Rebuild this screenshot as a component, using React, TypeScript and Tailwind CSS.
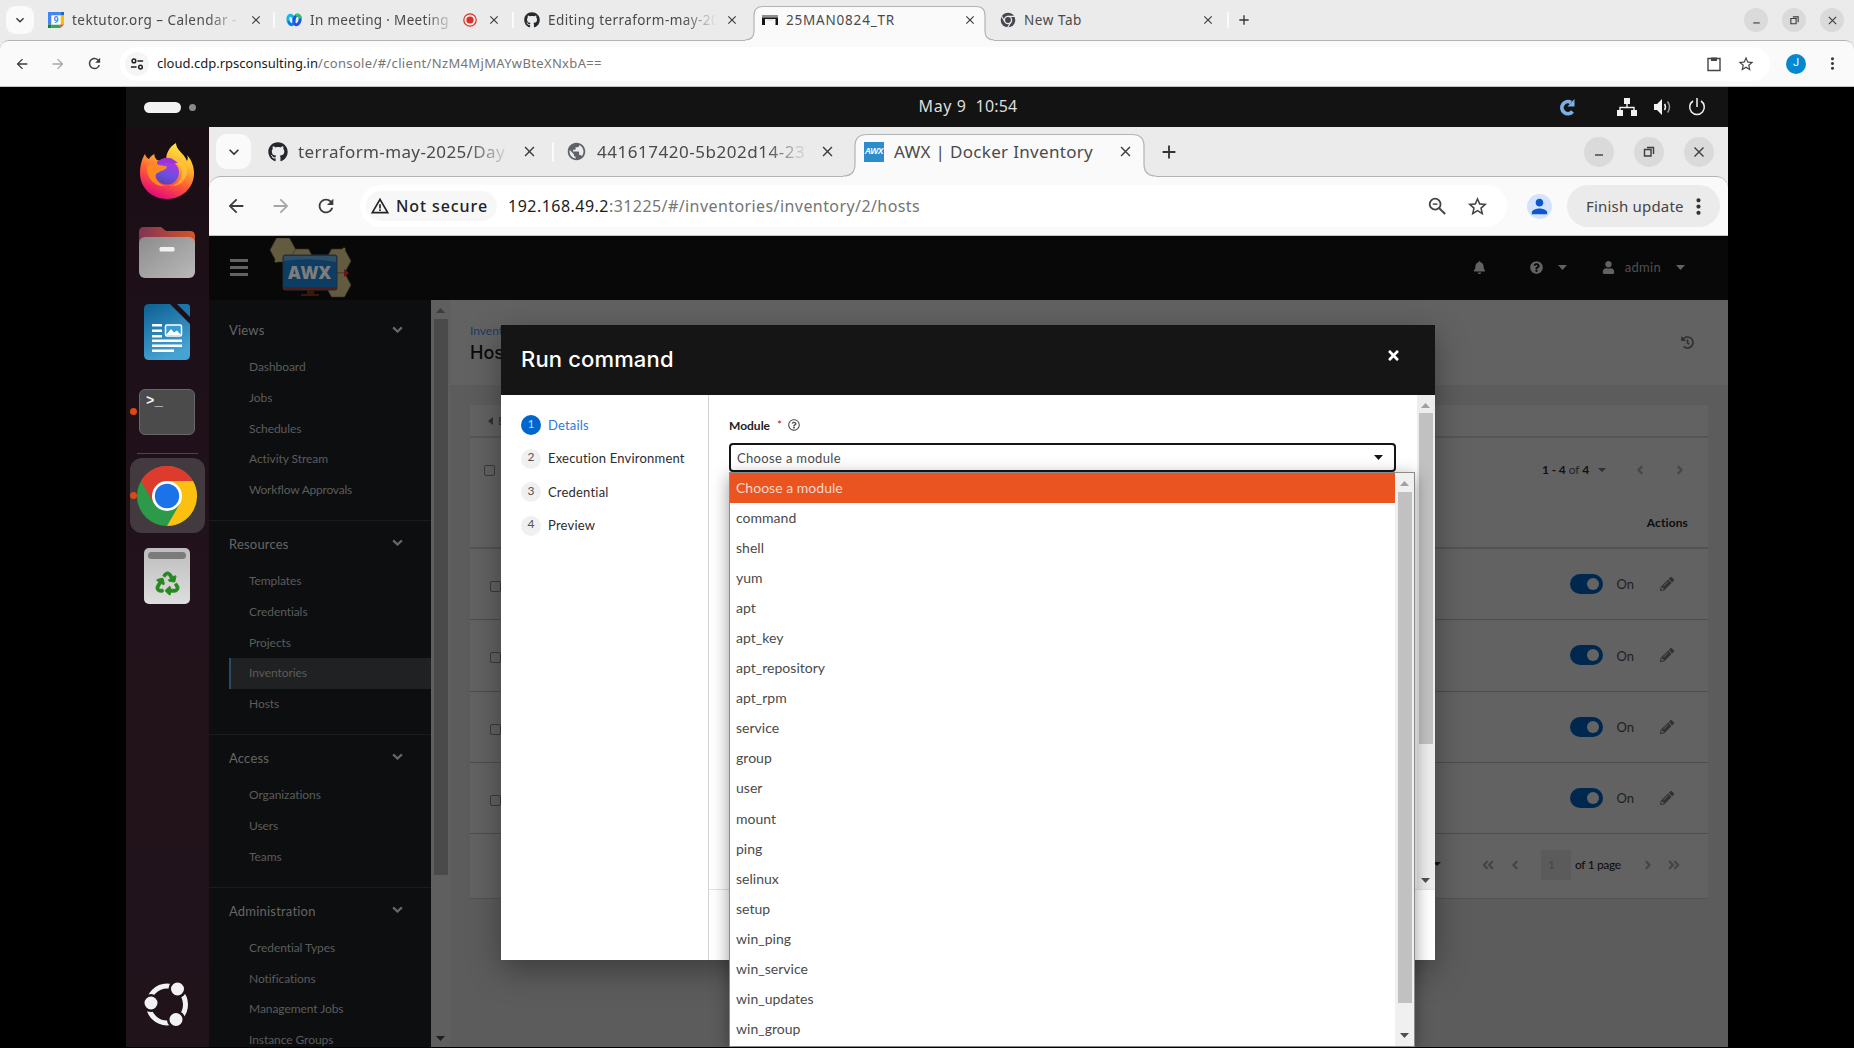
import type { ReactNode } from "react";
import {
  MdAdd,
  MdArrowBack,
  MdArrowForward,
  MdClose,
  MdKeyboardArrowDown,
  MdMoreVert,
  MdPerson,
  MdPublic,
  MdRefresh,
  MdStarBorder,
  MdWarningAmber,
} from "react-icons/md";
import {
  FaAngleDoubleLeft,
  FaAngleDoubleRight,
  FaAngleLeft,
  FaAngleRight,
  FaBell,
  FaGithub,
  FaHistory,
  FaPencilAlt,
  FaQuestionCircle,
  FaRecycle,
  FaRegQuestionCircle,
  FaTimes,
  FaUser,
} from "react-icons/fa";

const fade = "[mask-image:linear-gradient(to_right,black_80%,transparent)]";

function Triangle({ className, dir = "down" }: { className: string; dir?: "up" | "down" | "left" }) {
  const d = { up: "M0 10L10 0L20 10Z", down: "M0 0L20 0L10 10Z", left: "M20 0L20 20L0 10Z" }[dir];
  return (
    <svg viewBox={dir === "left" ? "0 0 20 20" : "0 0 20 10"} preserveAspectRatio="none" className={className}>
      <path d={d} fill="currentColor" />
    </svg>
  );
}

/* ---------- favicons ---------- */

function CalendarIcon() {
  return (
    <svg viewBox="0 0 16 16" className="size-4 shrink-0">
      <path d="M0 0h12.500v3.500H3.500v9H0z" fill="#4285f4" />
      <path d="M12.500 0H16v3.500h-3.500z" fill="#1967d2" />
      <path d="M12.500 3.500H16v9h-3.500z" fill="#fbbc04" />
      <path d="M0 12.500h3.500V16H0z" fill="#188038" />
      <path d="M3.500 12.500h9V16h-9z" fill="#34a853" />
      <path d="M12.500 12.500H16L12.500 16z" fill="#ea4335" />
      <path d="M3.500 3.500h9v9h-9z" fill="#fff" />
      <text x="8" y="11.300" textAnchor="middle" fontSize="9" fontWeight="700" fontFamily="Roboto, sans-serif" fill="#4285f4">9</text>
    </svg>
  );
}

function WebexIcon() {
  return (
    <svg viewBox="0 0 16 16" className="size-4 shrink-0" fill="none">
      <ellipse cx="5" cy="8" rx="3" ry="4.800" stroke="#12b5e8" strokeWidth="3" transform="rotate(-12 5 8)" />
      <ellipse cx="11" cy="8" rx="3" ry="4.800" stroke="#1f50e8" strokeWidth="3" transform="rotate(12 11 8)" />
      <path d="M9.500 3.500C12 2 14.500 4 14.500 6.500" stroke="#27c96b" strokeWidth="3" />
      <path d="M2.500 9C3.500 13 6 14 8 10" stroke="#1670e6" strokeWidth="2.500" />
    </svg>
  );
}

function ConsoleIcon() {
  return (
    <svg viewBox="0 0 16 16" className="size-4 shrink-0">
      <path d="M0 3h16v2.500H0z" fill="#8d8f93" />
      <path d="M0 5.500h16V13h-2.500V7H3v6H0z" fill="#151515" />
      <path d="M4.500 7.500h7v1h-7z" fill="#f0c8b8" />
    </svg>
  );
}

function ChromeMono() {
  return (
    <svg viewBox="0 0 16 16" className="size-4 shrink-0">
      <circle cx="8" cy="8" r="7.300" fill="#45484d" />
      <circle cx="8" cy="8" r="3.600" fill="none" stroke="#ebebeb" strokeWidth="1.300" />
      <path d="M8 4.400h7M4.900 9.800L1.600 4.200M11.100 9.800L7.600 15.500" stroke="#ebebeb" strokeWidth="1.200" />
    </svg>
  );
}

function RecordIcon() {
  return (
    <svg viewBox="0 0 14 14" className="mr-[2px] size-3.5 shrink-0">
      <circle cx="7" cy="7" r="6.200" fill="none" stroke="#d93025" strokeWidth="1.200" />
      <circle cx="7" cy="7" r="3.600" fill="#d93025" />
    </svg>
  );
}

function AwxFavicon() {
  return (
    <span className="flex size-5 shrink-0 items-center justify-center bg-[#2f8ccb] font-['Liberation_Sans'] text-[8.5px] font-bold italic tracking-[-0.3px] text-white">
      AWX
    </span>
  );
}

/* ---------- browser pieces ---------- */

type TabProps = {
  icon: ReactNode;
  title: string;
  className: string;
  titleClass?: string;
  big?: boolean;
  fades?: boolean;
  extra?: ReactNode;
  shape?: ReactNode;
};

function Tab({ icon, title, className, titleClass = "", big, fades, extra, shape }: TabProps) {
  return (
    <div className={`relative flex h-full shrink-0 items-center ${className}`}>
      {shape}
      <div className={`relative flex min-w-0 flex-1 items-center ${big ? "gap-2.5" : "gap-2"}`}>
        {icon}
        <span
          className={`min-w-0 flex-1 overflow-hidden whitespace-nowrap text-[#4a4a4a] ${big ? "text-[17px]" : "text-[13.5px]"} ${fades ? fade : ""} ${titleClass}`}
        >
          {title}
        </span>
        {extra}
        <MdClose className={`shrink-0 text-[#3c3c3c] ${big ? "size-[17px]" : "size-3.5"}`} />
      </div>
    </div>
  );
}

function TabShape({ width, height, radius }: { width: number; height: number; radius: number }) {
  const r = radius;
  const d = `M${-r} ${height}Q0 ${height} 0 ${height - r}V${r}Q0 0.500 ${r} 0.500H${width - r}Q${width} 0.500 ${width} ${r}V${height - r}Q${width} ${height} ${width + r} ${height}`;
  return (
    <svg width={width} height={height + 2} className="absolute bottom-[-2px] left-0 overflow-visible">
      <path d={`${d}V${height + 2}H${-r}Z`} fill="#fafafa" />
      <path d={d} fill="none" stroke="#b3b3b3" strokeWidth="1.200" />
    </svg>
  );
}

function WindowButtons({ big }: { big?: boolean }) {
  const box = big ? "size-[30px]" : "size-6";
  return (
    <div className={`flex items-center ${big ? "gap-5 pr-[14px]" : "gap-3.5 pr-[10px]"}`}>
      {["M4 11h8", "M3.500 5.500h6.500v6.500h-6.500zM6 3.500h6.500v6.500", "M3.500 3.500l9 9M12.500 3.500l-9 9"].map((d) => (
        <span key={d} className={`flex items-center justify-center rounded-full bg-[#dadada] ${box}`}>
          <svg viewBox="0 0 16 16" className={big ? "size-4" : "size-[13px]"} fill="none" stroke="#3d3d3d" strokeWidth="1.400">
            <path d={d} />
          </svg>
        </span>
      ))}
    </div>
  );
}

function Separator({ big }: { big?: boolean }) {
  return <span className={`w-0.5 shrink-0 rounded bg-[#fafafa] ${big ? "h-5" : "h-4"}`} />;
}

function OuterBrowser() {
  return (
    <header className="flex h-[87px] shrink-0 flex-col bg-[#ebebeb]">
      <div className="flex h-10 items-center pl-1.5 font-['Noto_Sans']">
        <span className="flex size-7 items-center justify-center rounded-[9px] bg-[#fafafa]">
          <MdKeyboardArrowDown className="size-4 text-[#333]" />
        </span>
        <Tab className="ml-[3px] w-[236px] pl-[11px] pr-[10px]" icon={<CalendarIcon />} title="tektutor.org – Calendar - " fades titleClass="tracking-[0.45px]" />
        <Separator />
        <Tab
          className="w-[237px] pl-[11px] pr-[11px]"
          icon={<WebexIcon />}
          title="In meeting · Meeting  ·"
          fades
          titleClass="tracking-[0.32px]"
          extra={<RecordIcon />}
        />
        <Separator />
        <Tab className="w-[240px] pl-[10px] pr-[15px]" icon={<FaGithub className="size-4 shrink-0 text-[#24292f]" />} title="Editing terraform-may-20" fades titleClass="tracking-[0.42px]" />
        <Tab
          className="w-[231px] pl-2 pr-2"
          icon={<ConsoleIcon />}
          title="25MAN0824_TR"
          titleClass="tracking-[0.8px]"
          shape={<TabShape width={231} height={34} radius={9} />}
        />
        <Tab className="w-[242px] pl-[15px] pr-[12px]" icon={<ChromeMono />} title="New Tab" titleClass="tracking-[0.55px]" />
        <Separator />
        <MdAdd className="ml-[7px] size-4 text-[#333]" />
        <div className="flex-1" />
        <WindowButtons />
      </div>
      <div className="flex h-[47px] items-center rounded-t-[9px] border-b border-t border-b-[#c4c4c4] border-t-[#b3b3b3] bg-[#fafafa] pl-3.5">
        <MdArrowBack className="size-4 text-[#3c3c3c]" />
        <MdArrowForward className="ml-5 size-4 text-[#a6a6a6]" />
        <MdRefresh className="ml-5 size-[17px] text-[#3c3c3c]" />
        <div className="ml-[17px] flex h-[34px] w-[1650px] items-center rounded-full bg-white pl-[5px] pr-[15px] font-['Noto_Sans'] text-[13px]">
          <span className="flex size-6 items-center justify-center rounded-full bg-[#f5f5f5]">
            <svg viewBox="0 0 16 16" className="size-3.5" fill="none" stroke="#222" strokeWidth="1.700">
              <circle cx="4.500" cy="4.500" r="2.100" />
              <path d="M8.500 4.500H15M1 11.500h6.500" />
              <circle cx="12" cy="11.500" r="2.100" />
            </svg>
          </span>
          <span className="ml-2 text-[#1b1b1b]">cloud.cdp.rpsconsulting.in</span>
          <span className="tracking-[0.34px] text-[#757575]">/console/#/client/NzM4MjMAYwBteXNxbA==</span>
          <div className="flex-1" />
          <svg viewBox="0 0 16 16" className="size-4" fill="none" stroke="#444" strokeWidth="1.400">
            <path d="M2 2.500h12v12H2z" />
            <path d="M5 1.500h6V5H5z" fill="#444" stroke="none" />
          </svg>
          <MdStarBorder className="ml-[15px] size-[18px] text-[#444]" />
        </div>
        <span className="ml-4 flex size-5 items-center justify-center rounded-full bg-[#0288d1] font-['Roboto'] text-[11px] text-white">J</span>
        <MdMoreVert className="ml-[17px] size-[19px] text-[#3c3c3c]" />
      </div>
    </header>
  );
}

function RemoteTopBar() {
  return (
    <div className="grid h-10 shrink-0 grid-cols-[82px_1fr_auto_1fr] items-center bg-[#131313]">
      <div className="flex items-center gap-[8px] pl-[18px]">
        <span className="h-[11px] w-[37px] rounded-full bg-[#f2f2f2]" />
        <span className="size-[7px] rounded-full bg-[#8a8a8a]" />
      </div>
      <div />
      <div className="flex gap-[9px] pb-[3px] font-['Noto_Sans'] text-[16px] text-[#dedede]">
        <span className="tracking-[0.6px]">May 9</span>
        <span className="tracking-[0.2px]">10:54</span>
      </div>
      <div className="flex items-center justify-end pr-[22px] text-[#f2f2f2]">
        <svg viewBox="0 0 18 18" className="size-[18px]" fill="none" stroke="#7ab0e6" strokeWidth="3.800">
          <path d="M14.500 13.500A6 6 0 1 1 13 4.500" />
          <path d="M16.500 1v7.500H9.500z" fill="#7ab0e6" stroke="none" />
        </svg>
        <svg viewBox="0 0 20 18" className="ml-[41px] h-[18px] w-5" fill="currentColor">
          <path d="M7 0h6v6H7zM0 12h6v6H0zM14 12h6v6h-6z" />
          <path d="M10 6v3M3 12V9.500h14V12" fill="none" stroke="currentColor" strokeWidth="1.400" />
        </svg>
        <svg viewBox="0 0 20 18" className="ml-[16px] h-[18px] w-5" fill="currentColor">
          <path d="M1 6h3l5-5v16l-5-5H1z" />
          <path d="M11.500 6q2 3 0 6" fill="none" stroke="currentColor" strokeWidth="1.500" />
          <path d="M14.500 3.500q4 5.500 0 11" fill="none" stroke="#9a9a9a" strokeWidth="1.500" />
        </svg>
        <svg viewBox="0 0 18 18" className="ml-[15px] size-[18px]" fill="none" stroke="currentColor" strokeWidth="1.500">
          <path d="M5 3a7.300 7.300 0 1 0 8 0M9 0v9" />
        </svg>
      </div>
    </div>
  );
}

/* ---------- dock ---------- */

function Firefox() {
  return (
    <svg viewBox="0 0 54 56" className="h-14 w-[54px]">
      <defs>
        <linearGradient id="ffBody" x1="0.800" y1="0" x2="0.350" y2="1">
          <stop offset="0" stopColor="#fff44f" />
          <stop offset="0.350" stopColor="#ffb32c" />
          <stop offset="0.650" stopColor="#ff5a36" />
          <stop offset="1" stopColor="#e3077c" />
        </linearGradient>
        <linearGradient id="ffGlobe" x1="0.700" y1="0" x2="0.300" y2="1">
          <stop offset="0" stopColor="#b833e1" />
          <stop offset="0.600" stopColor="#6a4fe0" />
          <stop offset="1" stopColor="#5b3fae" />
        </linearGradient>
      </defs>
      <path d="M5 11C6 14 7 15 9 16 10 14 12 12 14.500 11 14 13 15 15 17 17L27 20C24 12 30 3 36 0 36 7 44 10 47 18 48 16 48 14 47 12 51 16 54 23 54 30 54 45 42 56 27 56S0 45 0 30C0 23 2 15 5 11Z" fill="url(#ffBody)" />
      <path d="M30 18C38 19 43 24 42 32 41 38 36 42 30 43 40 44 48 36 47 26 45 20 36 16 30 18Z" fill="#ffcf3a" opacity="0.600" />
      <circle cx="27" cy="29.500" r="12" fill="url(#ffGlobe)" />
      <path d="M17 19C21 15 29 13 34 17L38 20 33 20.500C29 19.500 24 20 17 21Z" fill="#9b32d6" />
      <path d="M7 23C12 20 20 22 27 23.500 26 28 21 27 16 31 14 35 18 41 25 43 14 44 6 34 7 23Z" fill="#ff8a1e" />
    </svg>
  );
}

function Files() {
  return (
    <svg viewBox="0 0 56 51" className="h-[51px] w-14">
      <defs>
        <linearGradient id="fold" x1="0" x2="1">
          <stop offset="0" stopColor="#7f3454" />
          <stop offset="1" stopColor="#d9532a" />
        </linearGradient>
        <linearGradient id="front" x1="0" y1="0" x2="1" y2="1">
          <stop offset="0" stopColor="#8c8c8c" />
          <stop offset="1" stopColor="#b9b9b9" />
        </linearGradient>
      </defs>
      <path d="M0 20V5Q0 0 5 0H22L27 4H51Q56 4 56 9V20Z" fill="url(#fold)" />
      <rect y="10" width="56" height="41" rx="6" fill="url(#front)" />
      <rect x="20.500" y="20" width="15" height="4.500" rx="1.500" fill="#f1f1f1" />
    </svg>
  );
}

function Writer() {
  return (
    <svg viewBox="0 0 46 56" className="h-14 w-[46px]">
      <defs>
        <linearGradient id="wr" x1="0" y1="0" x2="0.400" y2="1">
          <stop offset="0" stopColor="#0c5f92" />
          <stop offset="1" stopColor="#45a3d4" />
        </linearGradient>
      </defs>
      <path d="M5 0H26L46 20V51Q46 56 41 56H5Q0 56 0 51V5Q0 0 5 0Z" fill="url(#wr)" />
      <path d="M33 0H43Q46 0 46 3V13Z" fill="#1d75a8" />
      <g fill="#fff">
        <path d="M8 20h10v2.500H8zM8 25.500h10V28H8zM8 31h10v2.500H8zM8 35.500h30V38H8zM8 40.500h30V43H8zM8 45.500h22V48H8z" />
      </g>
      <rect x="21.500" y="21" width="16" height="11" rx="1.500" fill="#3a9bd0" stroke="#fff" strokeWidth="1.500" />
      <path d="M22 31L27 25 30 28.500 33 26.500 37 31Z" fill="#fff" />
    </svg>
  );
}

function ChromeColor() {
  return (
    <svg viewBox="0 0 60 60" className="size-[60px]">
      <circle cx="30" cy="30" r="30" fill="#2c9a48" />
      <path d="M4 15A30 30 0 0 1 56 15H30L17 37.500Z" fill="#dd3b2e" />
      <path d="M56 15A30 30 0 0 1 30 60L43 37.500 30 15Z" fill="#fbc010" />
      <circle cx="30" cy="30" r="15" fill="#fff" />
      <circle cx="30" cy="30" r="12.200" fill="#1a73e8" />
    </svg>
  );
}

function UbuntuLogo() {
  return (
    <svg viewBox="0 0 46 46" className="size-[46px]" fill="none">
      <circle cx="23" cy="23.500" r="18.500" stroke="#f2f2f2" strokeWidth="5" />
      <g fill="#f2f2f2" stroke="#20131b" strokeWidth="2.600">
        <circle cx="7" cy="22" r="7.800" />
        <circle cx="33.500" cy="8" r="7.800" />
        <circle cx="32" cy="38.500" r="7.800" />
      </g>
    </svg>
  );
}

function Dock() {
  return (
    <aside className="flex w-[83px] shrink-0 flex-col items-center bg-gradient-to-b from-[#1a0e15] via-[#22121b] to-[#20131a] pb-[20px] pr-px pt-[16px]">
      <Firefox />
      <div className="mt-7"><Files /></div>
      <div className="mt-[26px]"><Writer /></div>
      <div className="relative mt-[29px] flex h-[46px] w-14 rounded-md border border-[#686868] bg-[#4b4b4b] pl-[6px] pt-[1px] font-['Liberation_Mono'] text-[14px] font-bold leading-[20px] text-[#f0f0f0]">
        &gt;_
        <span className="absolute -left-[10px] top-[18px] size-[7px] rounded-full bg-[#dd4814]" />
      </div>
      <div className="mt-[18px] h-px w-[61px] bg-[#4d4449]" />
      <div className="relative mt-1 flex h-[75px] w-[75px] items-center justify-center rounded-xl bg-[#423a3f]">
        <ChromeColor />
        <span className="absolute left-0 top-[34px] size-[7px] rounded-full bg-[#dd4814]" />
      </div>
      <div className="mt-[15px] flex h-14 w-[46px] flex-col items-center rounded-[5px] bg-gradient-to-b from-[#bdbdbd] to-[#dedede] pt-[4px]">
        <span className="h-[7px] w-[38px] rounded bg-[#7b7b7b]" />
        <FaRecycle className="mt-[13px] size-[23px] overflow-visible stroke-[#26891f] stroke-[22px] text-[#26891f]" />
      </div>
      <div className="flex-1" />
      <UbuntuLogo />
    </aside>
  );
}

/* ---------- inner browser ---------- */

function InnerBrowser() {
  return (
    <div className="flex h-[109px] shrink-0 flex-col bg-[#ebebeb] font-['Noto_Sans']">
      <div className="flex h-[49px] items-center pl-[7px]">
        <span className="flex size-[35px] items-center justify-center rounded-[11px] bg-[#fafafa]">
          <MdKeyboardArrowDown className="size-5 text-[#333]" />
        </span>
        <Tab big className="w-[301px] pl-[17px] pr-[14px]" icon={<FaGithub className="size-5 shrink-0 text-[#24292f]" />} title="terraform-may-2025/Day" fades titleClass="tracking-[0.37px]" />
        <Separator big />
        <Tab big className="w-[301px] pl-[12px] pr-[19px]" icon={<MdPublic className="size-[21px] shrink-0 text-[#5f6368]" />} title="441617420-5b202d14-23" fades titleClass="tracking-[0.53px]" />
        <Tab
          big
          className="w-[289px] pl-[9px] pr-[10px]"
          icon={<AwxFavicon />}
          title="AWX | Docker Inventory"
          titleClass="tracking-[0.31px]"
          shape={<TabShape width={289} height={42} radius={12} />}
        />
        <MdAdd className="ml-[14px] size-[22px] text-[#333]" />
        <div className="flex-1" />
        <WindowButtons big />
      </div>
      <div className="flex h-[60px] items-center rounded-t-[12px] border-b border-t border-b-[#c4c4c4] border-t-[#b3b3b3] bg-[#fafafa] pl-[16px]">
        <MdArrowBack className="size-[22px] text-[#3c3c3c]" />
        <MdArrowForward className="ml-[23px] size-[22px] text-[#a6a6a6]" />
        <MdRefresh className="ml-[23px] size-[22px] text-[#3c3c3c]" />
        <div className="ml-[23px] flex h-[42px] w-[1147px] items-center rounded-full bg-white pl-[6px] pr-[18px] text-[16px]">
          <span className="flex h-[30px] w-[131px] items-center gap-[6px] rounded-full bg-[#f7f7f7] pl-[4px]">
            <MdWarningAmber className="size-5 text-[#222]" />
            <span className="whitespace-nowrap font-medium tracking-[0.9px] text-[#222]">Not secure</span>
          </span>
          <span className="ml-[11px] tracking-[0.48px] text-[#1b1b1b]">192.168.49.2</span>
          <span className="tracking-[0.42px] text-[#757575]">:31225/#/inventories/inventory/2/hosts</span>
          <div className="flex-1" />
          <svg viewBox="0 0 20 20" className="size-[19px]" fill="none" stroke="#444" strokeWidth="1.900">
            <circle cx="7.500" cy="7.500" r="5.700" />
            <path d="M5 7.500h5" strokeWidth="1.500" />
            <path d="M11.700 11.700l6.300 6.300" strokeWidth="2.200" />
          </svg>
          <MdStarBorder className="ml-[19px] size-[23px] text-[#444]" />
        </div>
        <span className="ml-[20px] flex size-[25px] items-center justify-center rounded-full bg-[#d3e3fd]">
          <MdPerson className="size-[23px] text-[#0b57d0]" />
        </span>
        <span className="ml-[15px] flex h-[42px] w-[153px] items-center rounded-full bg-[#ebebeb] pl-[19px] text-[15px] tracking-[0.2px] text-[#444]">
          <span className="whitespace-nowrap">Finish update</span>
          <MdMoreVert className="ml-[2px] size-[25px] shrink-0 text-[#333]" />
        </span>
      </div>
    </div>
  );
}

/* ---------- AWX page ---------- */

function AwxLogo() {
  const hex = "M6.500 0H19.500L26 12 19.500 24H6.500L0 12Z";
  return (
    <svg viewBox="0 0 82 60" className="h-[60px] w-[82px]">
      <g fill="#625b40" stroke="#3a2f22" strokeWidth="0.600">
        <path d={hex} transform="translate(0 0)" />
        <path d={hex} transform="translate(19 11)" />
        <path d={hex} transform="translate(55 11)" />
        <path d={hex} transform="translate(55 35)" />
      </g>
      <path d="M74 31l5 4-5 4z" fill="#6b1518" />
      <circle cx="6" cy="23" r="1.500" fill="#5a6a12" />
      <circle cx="74" cy="11" r="1.500" fill="#5a6a12" />
      <rect x="13" y="17" width="54" height="35" rx="2" fill="#0d3d63" stroke="#252f38" />
      <path d="M14 18H66V24Q40 19 14 23Z" fill="#2f4f66" />
      <path d="M13.500 49H66.500V52H13.500Z" fill="#521d1a" />
      <path d="M37 52h7v4h5v2H31v-2h6z" fill="#3c1609" />
      <text x="39.500" y="41" textAnchor="middle" fontFamily="'Open Sans', sans-serif" fontWeight="800" fontSize="18" textLength="43" lengthAdjust="spacingAndGlyphs" fill="#7d7d7d">AWX</text>
    </svg>
  );
}

function AwxHeader() {
  return (
    <div className="flex h-16 shrink-0 items-center bg-[#080808] pb-px pl-[21px] text-[#626262]">
      <div className="flex flex-col gap-[4px]">
        <span className="h-[3px] w-[18px] bg-[#626262]" />
        <span className="h-[3px] w-[18px] bg-[#626262]" />
        <span className="h-[3px] w-[18px] bg-[#626262]" />
      </div>
      <div className="ml-[22px]"><AwxLogo /></div>
      <div className="flex-1" />
      <FaBell className="size-[13px]" />
      <FaQuestionCircle className="ml-[44px] size-[13px]" />
      <Triangle className="ml-[15px] h-[5px] w-[9px]" />
      <FaUser className="ml-[35px] size-[13px]" />
      <span className="ml-[10px] mt-px text-[13px] tracking-[0.3px] text-[#505050]">admin</span>
      <Triangle className="ml-[15px] mr-[43px] h-[5px] w-[9px]" />
    </div>
  );
}

const sections = [
  { name: "Views", items: ["Dashboard", "Jobs", "Schedules", "Activity Stream", "Workflow Approvals"] },
  { name: "Resources", items: ["Templates", "Credentials", "Projects", "Inventories", "Hosts"] },
  { name: "Access", items: ["Organizations", "Users", "Teams"] },
  { name: "Administration", items: ["Credential Types", "Notifications", "Management Jobs", "Instance Groups"] },
];

function Sidebar() {
  return (
    <nav className="w-[222px] shrink-0 overflow-hidden bg-[#0d0e0f] pt-[7px]">
      {sections.map((s) => (
        <div key={s.name} className="border-b border-[#1a1b1d] pb-[14.8px] pt-1.5">
          <div className="flex h-9 items-center justify-between pl-[20px] pr-[28px] text-[#666]">
            <span className="text-[13px] tracking-[0.2px]">{s.name}</span>
            <svg viewBox="0 0 12 8" className="-mt-[4px] h-[7px] w-[11px]" fill="none" stroke="currentColor" strokeWidth="2.600">
              <path d="M1 1.500L6 6.300L11 1.500" />
            </svg>
          </div>
          <ul className="pt-[3.200px]">
            {s.items.map((item) => (
              <li
                key={item}
                className={`ml-[20px] flex h-[30.600px] items-center text-[12px] text-[#5c5c5c] ${
                  item === "Workflow Approvals" ? "tracking-[-0.22px]" : "tracking-[-0.07px]"
                } ${item === "Inventories" ? "border-l-2 border-[#2b4a66] bg-[#202122] pl-[18px]" : "pl-[20px]"}`}
              >
                {item}
              </li>
            ))}
          </ul>
        </div>
      ))}
    </nav>
  );
}

function HostRow() {
  return (
    <div className="flex h-[71.300px] items-center border-b border-[#4d4d4d] pl-5">
      <span className="mt-[5px] size-[11px] rounded-[2px] border border-[#3a3a3a]" />
      <div className="flex-1" />
      <span className="flex h-5 w-[33px] items-center justify-end rounded-full bg-[#00284f] pr-[4px]">
        <span className="size-[12px] rounded-full bg-[#646464]" />
      </span>
      <span className="ml-[13px] mt-[2px] text-[13px] text-[#1f1f1f]">On</span>
      <FaPencilAlt className="ml-[26px] mr-[34px] size-[14px] text-[#303133]" />
    </div>
  );
}

function HostsPage() {
  return (
    <main className="flex flex-1 flex-col bg-[#5c5c5c]">
      <div className="flex h-[85px] shrink-0 justify-between bg-[#626262] pl-5 pr-[34px] pt-[22px]">
        <div>
          <div className="text-[12px] leading-[18px] text-[#1e3c60]">Inventories</div>
          <div className="font-['Inter'] text-[18px] font-medium leading-[25px] text-[#0a0a0a]">Hosts</div>
        </div>
        <FaHistory className="mt-[14px] size-[13px] text-[#2e2f31]" />
      </div>
      <div className="mx-5 mt-5 h-[494px] border-b border-[#525252] bg-[#626262]">
        <div className="flex h-[33px] items-center gap-[5px] border-b-2 border-[#555] pl-[18px] text-[#2e2f31]">
          <Triangle dir="left" className="h-[8px] w-[5px]" />
          <span className="text-[12px]">Back to Inventories</span>
        </div>
        <div className="flex h-[64px] items-center pl-[14px] pr-[21px]">
          <span className="size-[11px] rounded-[2px] border border-[#3a3a3a]" />
          <div className="flex-1" />
          <span className="whitespace-nowrap text-[12px] tracking-[-0.1px] text-[#262626]">
            <b className="text-[#111]">1 - 4</b> of <b className="text-[#111]">4</b>
          </span>
          <Triangle className="ml-[9px] h-[4px] w-[8px] text-[#2e2f31]" />
          <FaAngleLeft className="ml-[27px] size-3.5 text-[#464646]" />
          <FaAngleRight className="ml-[26px] size-3.5 text-[#464646]" />
        </div>
        <div className="flex h-[47px] justify-end border-b-2 border-[#535353] pr-5 pt-[12px] text-[12px] font-bold leading-[18px] tracking-[0.13px] text-[#0d0d0d]">
          Actions
        </div>
        <HostRow />
        <HostRow />
        <HostRow />
        <HostRow />
        <div className="flex h-[62px] items-center pr-[27px] text-[#454545]">
          <div className="flex-1" />
          <Triangle className="mr-[40px] mt-[-2px] h-[4px] w-[8px] text-[#151515]" />
          <FaAngleDoubleLeft className="size-[14px]" />
          <FaAngleLeft className="ml-[13px] size-[14px]" />
          <span className="ml-[19px] flex h-[30px] w-[30px] items-center bg-[#5b5b5b] pl-[7px] text-[12px]">1</span>
          <span className="ml-[4px] w-[46px] whitespace-nowrap text-[12px] font-medium tracking-[-0.35px] text-[#111]">of 1 page</span>
          <FaAngleRight className="ml-[20px] size-[14px]" />
          <FaAngleDoubleRight className="ml-[12px] size-[14px]" />
        </div>
      </div>
    </main>
  );
}

/* ---------- modal ---------- */

const steps = ["Details", "Execution Environment", "Credential", "Preview"];

const modules = [
  "Choose a module", "command", "shell", "yum", "apt", "apt_key", "apt_repository", "apt_rpm", "service", "group",
  "user", "mount", "ping", "selinux", "setup", "win_ping", "win_service", "win_updates", "win_group",
];

function ModuleMenu() {
  return (
    <div className="absolute left-[228px] top-[147px] flex h-[575px] w-[686px] border border-[#8b8b8b] bg-white shadow-[0_4px_16px_rgba(0,0,0,0.4)]">
      <ul className="flex-1">
        {modules.map((m, i) => (
          <li
            key={m}
            className={`flex h-[30.050px] items-center pb-px pl-1.5 text-[14px] tracking-[0.02px] ${
              i === 0 ? "bg-[#e95420] text-[#fbd8cb]" : "text-[#4a4a4a]"
            }`}
          >
            {m}
          </li>
        ))}
      </ul>
      <div className="flex w-[19px] flex-col items-center bg-[#f0f0f0] pb-2 pt-2">
        <Triangle dir="up" className="h-[5px] w-[9px] text-[#a0a0a0]" />
        <span className="mt-[6px] h-[511px] w-[14px] bg-[#c1c1c1]" />
        <div className="flex-1" />
        <Triangle className="h-[5px] w-[9px] text-[#505050]" />
      </div>
    </div>
  );
}

function RunCommandModal() {
  return (
    <div className="absolute left-[292px] top-[89px] flex h-[635px] w-[934px] flex-col bg-white shadow-[0_10px_30px_rgba(0,0,0,0.35)]">
      <div className="flex h-[70px] shrink-0 items-center justify-between bg-[#151515] pl-5 pr-[34px]">
        <h1 className="-mt-[2px] font-['Inter'] text-[22px] font-medium tracking-[0.15px] text-white">Run command</h1>
        <FaTimes className="-mt-[9px] size-[15px] text-white" />
      </div>
      <div className="flex min-h-0 flex-1">
        <ol className="w-[208px] shrink-0 border-r border-[#d2d2d2] pl-[20px] pt-[20px]">
          {steps.map((s, i) => (
            <li key={s} className="mb-[13.500px] flex h-5 items-center gap-[7px]">
              <span
                className={`flex size-5 items-center justify-center rounded-full pb-[3px] text-[12px] ${
                  i === 0 ? "bg-[#0066cc] text-[#c7dcf3]" : "bg-[#f0f0f0] text-[#555]"
                }`}
              >
                {i + 1}
              </span>
              <span className={`mt-px text-[13px] tracking-[0.2px] ${i === 0 ? "text-[#2b7bd6]" : "text-[#2c2c2c]"}`}>{s}</span>
            </li>
          ))}
        </ol>
        <div className="flex flex-1 flex-col">
          <div className="flex h-[495px] border-b border-[#e2e2e2]">
            <div className="flex-1 pl-[20px] pr-[21px] pt-[21px]">
              <div className="flex h-[18px] items-center">
                <span className="mt-px text-[12px] font-bold text-[#222]">Module</span>
                <span className="ml-[7px] text-[12px] leading-[12px] text-[#c9190b]">*</span>
                <FaRegQuestionCircle className="ml-[6px] size-[12px] text-[#4f5255]" />
              </div>
              <div className="mt-[9px] flex h-[29px] items-center justify-between rounded-[4px] border-2 border-[#151515] pl-1.5 pr-[11px]">
                <span className="mt-[2px] text-[13px] tracking-[0.34px] text-[#4a4a4a]">Choose a module</span>
                <Triangle className="h-[5px] w-[9px] text-[#151515]" />
              </div>
            </div>
            <div className="flex w-[18px] flex-col items-center bg-[#ededed] pb-[6px] pr-px pt-[8px]">
              <Triangle dir="up" className="h-[5px] w-[9px] text-[#a0a0a0]" />
              <span className="mt-[5px] h-[331px] w-[14px] bg-[#c1c1c1]" />
              <div className="flex-1" />
              <Triangle className="h-[5px] w-[9px] text-[#505050]" />
            </div>
          </div>
        </div>
      </div>
      <ModuleMenu />
    </div>
  );
}

export default function App() {
  return (
    <div className="flex h-[1048px] w-[1854px] flex-col overflow-hidden bg-black">
      <OuterBrowser />
      <div className="ml-[126px] flex h-[960px] w-[1602px] flex-col overflow-hidden">
        <RemoteTopBar />
        <div className="flex min-h-0 flex-1">
          <Dock />
          <div className="flex min-w-0 flex-1 flex-col">
            <InnerBrowser />
            <div className="relative flex min-h-0 flex-1 flex-col font-['Lato']">
              <AwxHeader />
              <div className="flex min-h-0 flex-1">
                <Sidebar />
                <div className="flex w-[19px] shrink-0 flex-col items-center bg-[#5f5f5f] pb-[6px] pt-[8px]">
                  <Triangle dir="up" className="h-[5px] w-[9px] text-[#3d3d3d]" />
                  <span className="mt-[6px] h-[556px] w-[14px] bg-[#4a4a4a]" />
                  <div className="flex-1" />
                  <Triangle className="h-[5px] w-[9px] text-[#1f1f1f]" />
                </div>
                <HostsPage />
              </div>
              <RunCommandModal />
            </div>
          </div>
        </div>
      </div>
    </div>
  );
}
